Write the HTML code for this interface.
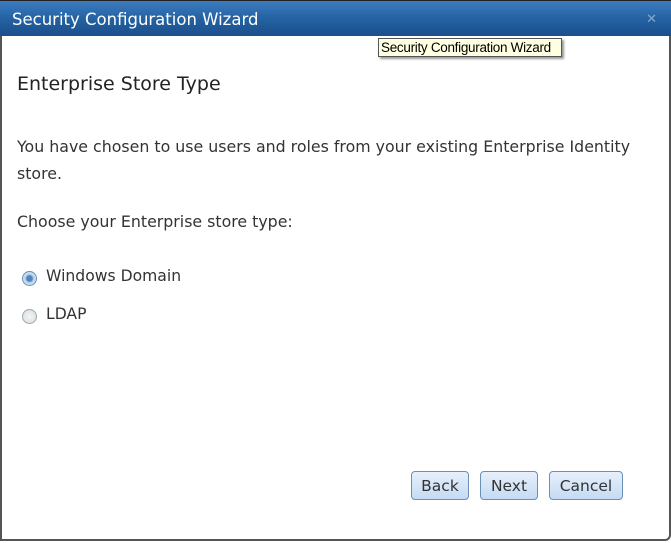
<!DOCTYPE html>
<html><head><style>
body{margin:0;width:671px;height:543px;background:#fff;font-family:"DejaVu Sans","Liberation Sans",sans-serif;position:relative;overflow:hidden}
.frame{position:absolute;left:0;top:0;width:667px;height:539px;border:2px solid #555;border-top:none;border-radius:0 0 6px 0;box-sizing:content-box}
.title{position:absolute;left:0;top:0;width:671px;height:36px;background:linear-gradient(#3d7cbf,#2462a3 50%,#1b4f8a);color:#fff;font-size:16.5px;line-height:38px;padding-left:12px;box-sizing:border-box;border-top:1px solid #222}
.x{position:absolute;right:14px;top:0px;color:#8aa8c8;font-size:13px}
.tip{position:absolute;left:378px;top:38px;width:184px;height:19px;background:#ffffe1;border:1px solid #555;font-size:13.5px;line-height:18px;box-sizing:border-box;padding-left:2px;box-shadow:2px 2px 2px #999;font-family:"Liberation Sans",sans-serif;letter-spacing:-0.3px;white-space:nowrap;overflow:hidden}
.h{position:absolute;left:17px;top:73px;font-size:19px;color:#222}
.t{position:absolute;left:17px;font-size:15.8px;color:#333;white-space:nowrap}
.r{position:absolute;left:22px;width:15px;height:15px;border-radius:50%;border:1px solid #9aa;background:radial-gradient(#f4f4f4,#d8dde2);box-sizing:border-box}
.r.on{border-color:#6b8fb5;background:radial-gradient(#4f86c0 30%,#bcd3ea 45%,#e8eef5)}
.b{position:absolute;top:471px;height:29px;border:1px solid #6b8fb5;border-radius:4px;background:linear-gradient(#e6f0fb,#c4dbf3);font-size:15.5px;color:#333;text-align:center;line-height:28px;box-sizing:border-box}
</style></head><body>
<div class="frame"></div>
<div class="title">Security Configuration Wizard<span class="x">✕</span></div>
<div class="tip">Security Configuration Wizard</div>
<div class="h">Enterprise Store Type</div>
<div class="t" style="top:137px">You have chosen to use users and roles from your existing Enterprise Identity</div>
<div class="t" style="top:164px">store.</div>
<div class="t" style="top:212px">Choose your Enterprise store type:</div>
<div class="r on" style="top:271px"></div><div class="t" style="left:46px;top:267px;font-size:15.6px">Windows Domain</div>
<div class="r" style="top:309px"></div><div class="t" style="left:46px;top:305px;font-size:15.6px">LDAP</div>
<div class="b" style="left:411px;width:58px">Back</div>
<div class="b" style="left:480px;width:58px">Next</div>
<div class="b" style="left:549px;width:74px">Cancel</div>
</body></html>
